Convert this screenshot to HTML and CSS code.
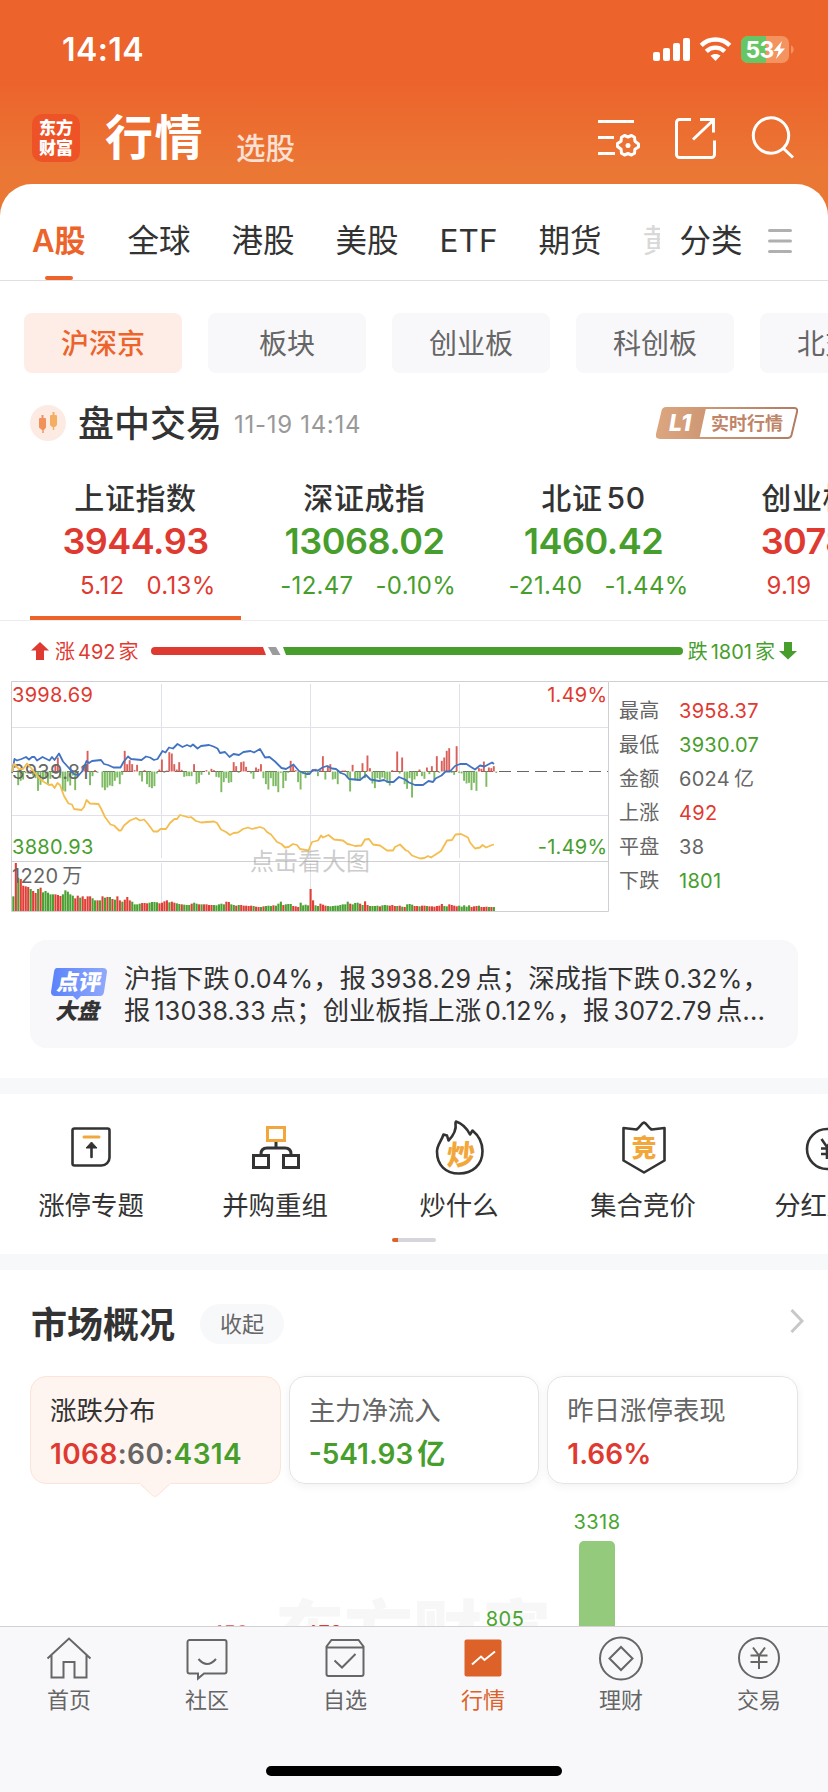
FILE: index.html
```html
<!DOCTYPE html>
<html lang="zh-CN">
<head>
<meta charset="utf-8">
<title>行情</title>
<link rel="stylesheet" href="styles.css">
</head>
<body>
<div class="app">
  <header class="top">
    <div class="status">
      <span class="clock">14:14</span>
      <svg class="status-icons" viewBox="0 0 142 28" width="142" height="28">
        <g fill="#fff">
          <rect x="0" y="16" width="7" height="9" rx="2"/><rect x="10" y="12" width="7" height="13" rx="2"/>
          <rect x="20" y="7" width="7" height="18" rx="2"/><rect x="30" y="2" width="7" height="23" rx="2"/>
          <path d="M62.500 25l-5-5.200c2.800-2.500 7.200-2.500 10 0z"/>
        </g>
        <g fill="none" stroke="#fff" stroke-width="4.400"><path d="M48.200 9.400c8-7.800 20.600-7.800 28.600 0"/><path d="M53.300 15.400c5.200-5 13.200-5 18.400 0"/></g>
        <rect x="88" y="0" width="48" height="27" rx="7" fill="#f3935f"/>
        <path d="M95 0h18v27H95a7 7 0 0 1-7-7V7a7 7 0 0 1 7-7z" fill="#66c666"/>
        <path d="M138 9.500c3.600 1 3.600 7 0 8z" fill="#f3935f"/>
        <text x="92.500" y="22" class="battery-text">53</text>
        <path d="M129 5l-8.500 10h5l-2.500 8 9-10.500h-5z" fill="#fff"/>
      </svg>
    </div>
    <div class="nav">
      <div class="logo"><span>东方</span><span>财富</span></div>
      <h1>行情</h1>
      <span class="nav-sub">选股</span>
      <svg class="nav-icons" viewBox="0 0 198 44" width="198" height="44" fill="none" stroke="#fff" stroke-width="3">
        <path d="M0 6.500h36M0 22.500h16M0 38.500h17"/>
        <path stroke-linejoin="round" d="M26.500 20.500l3.500 1.500 3.500-1.500 3 1.700.4 4 3.600 2.800v3l-3.600 2.300-.4 4-3 1.700-3.500-1.500-3.500 1.500-3-1.700-.4-4-3.600-2.800v-3l3.600-2.300.4-4z"/>
        <circle cx="30" cy="30.500" r="2.500" fill="#fff" stroke="none"/>
        <path d="M93 4.500H81.500a3 3 0 0 0-3 3v32a3 3 0 0 0 3 3h32a3 3 0 0 0 3-3V25.500M102 4.500h13.500V17.500M115 5.500L95 24.500"/>
        <circle cx="173" cy="20.500" r="17.700"/><path d="M185.500 33.500l9.500 9"/>
      </svg>
    </div>
  </header>

  <main class="sheet">
    <nav class="tabs">
      <span class="tab tab-on">A股</span><span class="tab">全球</span><span class="tab">港股</span><span class="tab">美股</span><span class="tab">ETF</span><span class="tab">期货</span><span class="tab tab-cut">黄金</span>
      <span class="tab tab-all">分类</span>
      <svg class="burger" viewBox="0 0 24 26" width="24" height="26" stroke="#b0b0b0" stroke-width="3" stroke-linecap="round"><path d="M1.500 2.500h21M1.500 13h21M1.500 23.500h21"/></svg>
    </nav>

    <div class="chips">
      <span class="chip chip-on">沪深京</span><span class="chip">板块</span><span class="chip">创业板</span><span class="chip">科创板</span><span class="chip">北交所</span>
    </div>

    <div class="session">
      <svg viewBox="0 0 36 36" width="36" height="36">
        <circle cx="18" cy="18" r="18" fill="#fcebe3"/>
        <path fill="#f0925a" d="M11.500 10h2v3h1.500a1 1 0 0 1 1 1v8.500l-2 2.500h-.3v3h-1.400v-3H12l-3-2.500V14a1 1 0 0 1 1-1h1.500z"/>
        <path fill="#f3ae63" d="M22.500 7h2v3H26a1 1 0 0 1 1 1v9l-2 2h-.8v3h-1.400v-3H22l-2-2v-9a1 1 0 0 1 1-1h1.500z"/>
      </svg>
      <h2>盘中交易</h2>
      <time>11-19 14:14</time>
      <svg class="level" viewBox="0 0 142 32" width="142" height="32">
        <defs><linearGradient id="gold" gradientUnits="userSpaceOnUse" x1="0" y1="0" x2="142" y2="0"><stop offset="0" stop-color="#dca77f"/><stop offset="1" stop-color="#b27a62"/></linearGradient></defs>
        <path fill="none" stroke="url(#gold)" stroke-width="2" d="M10 1h128q4 0 3 4l-5.500 23q-.8 3-4 3H4q-4 0-3-4L6.500 4q.8-3 3.500-3z"/>
        <path fill="url(#gold)" d="M9 1h41l-6.500 30H4q-4 0-3-4L6.500 4q.8-3 3.500-3z"/>
        <text x="13" y="24" class="level-l">L1</text>
        <text x="55" y="22.500" class="level-t">实时行情</text>
      </svg>
    </div>

    <div class="indices">
      <div class="index up index-on"><b>上证指数</b><strong>3944.93</strong><div class="chg"><span>5.12</span><span>0.13%</span></div></div>
      <div class="index down"><b>深证成指</b><strong>13068.02</strong><div class="chg"><span>-12.47</span><span>-0.10%</span></div></div>
      <div class="index down"><b>北证<i>50</i></b><strong>1460.42</strong><div class="chg"><span>-21.40</span><span>-1.44%</span></div></div>
      <div class="index up"><b>创业板指</b><strong>3078.11</strong><div class="chg"><span>9.19</span><span>0.30%</span></div></div>
    </div>

    <div class="breadth">
      <svg viewBox="0 0 20 20" width="20" height="20"><path fill="#df3a31" d="M10 1l9 8.500h-5V19H6V9.500H1z"/></svg>
      <span class="up">涨<i>492</i>家</span>
      <svg class="ratio" viewBox="0 0 532 8" width="532" height="8">
        <path fill="#df3a31" d="M4 0h108l3 8H4a4 4 0 0 1 0-8z"/><path fill="#9b9b9b" d="M117 0h8l4.500 8h-8z"/><path fill="#479e2c" d="M132 0h396a4 4 0 0 1 0 8H135z"/>
      </svg>
      <span class="down">跌<i>1801</i>家</span>
      <svg viewBox="0 0 20 20" width="20" height="20"><path fill="#479e2c" d="M10 18.500l9-8.500h-5V1H6v9H1z"/></svg>
    </div>

    <div class="market">
      <svg class="chart" id="chart" viewBox="0 0 598 232" width="598" height="232">
        <g stroke="#e0e1e9" stroke-width="1"><path d="M150.500 3v174M299.500 3v174M448.500 3v174M150.500 182v48M299.500 182v48M448.500 182v48M1 46.500h596M1 134.500h596"/></g>
        <path d="M.5 .5h597v230H.5zM.5 180.500h597" fill="none" stroke="#d0d0d4"/>
        <path d="M2 90.500h595" stroke="#666" stroke-dasharray="12 6"/>
        <g class="chart-label">
          <text x="1" y="21" fill="#df3a31">3998.69</text>
          <text x="596.500" y="21" text-anchor="end" fill="#df3a31">1.49%</text>
          <text x="1" y="173" fill="#479e2c">3880.93</text>
          <text x="596.500" y="173" text-anchor="end" fill="#479e2c">-1.49%</text>
        </g>
        <g id="bars"></g>
        <g class="chart-label" fill="#666"><text x="1" y="97.500">3939.81</text><text x="1" y="202">1220<tspan dx="4">万</tspan></text></g>
        <g id="lines"></g>
        <text x="239" y="189" class="hint">点击看大图</text>
      </svg>
      <dl class="stats">
        <dt>最高</dt><dd class="up">3958.37</dd>
        <dt>最低</dt><dd class="down">3930.07</dd>
        <dt>金额</dt><dd>6024<i>亿</i></dd>
        <dt>上涨</dt><dd class="up">492</dd>
        <dt>平盘</dt><dd>38</dd>
        <dt>下跌</dt><dd class="down">1801</dd>
      </dl>
    </div>

    <div class="review">
      <svg viewBox="0 0 58 56" width="58" height="56">
        <defs><linearGradient id="blue" x1="0" x2="1"><stop offset="0" stop-color="#5a82fa"/><stop offset="1" stop-color="#90a9fb"/></linearGradient></defs>
        <path fill="url(#blue)" d="M7 2h46q4 0 4 4l-3 20q-.6 4-4 4H31l-4 4-4-4H5q-4 0-4-4L4 6q.500-4 3-4z"/>
        <text transform="translate(6 24) skewX(-10)" class="rv-a">点评</text>
        <text transform="translate(5 53) skewX(-14)" class="rv-b">大盘</text>
      </svg>
      <p>沪指下跌<i class="pct">0.04%</i>，报<i>3938.29</i>点；深成指下跌<i class="pct">0.32%</i>，<br>报<i>13038.33</i>点；创业板指上涨<i class="pct">0.12%</i>，报<i>3072.79</i>点…</p>
    </div>

    <section class="shortcuts">
      <div class="short">
        <svg viewBox="0 0 56 56" width="56" height="56" fill="none" stroke="#333" stroke-width="2.600"><path d="M10.500 9.500h33a2 2 0 0 1 2 2v27a8 8 0 0 1-8 8h-27a2 2 0 0 1-2-2v-33a2 2 0 0 1 2-2z"/><path d="M20 18h15" stroke="#f2a73d" stroke-width="3" stroke-linecap="round"/><path d="M27.500 26v12" stroke-linecap="round"/><path d="M27.500 23l5.500 6H22z" fill="#333" stroke-width="1"/></svg>
        <span>涨停专题</span>
      </div>
      <div class="short">
        <svg viewBox="0 0 56 56" width="56" height="56" fill="none" stroke="#333" stroke-width="3"><path d="M19.500 8.500h17v13h-17z" stroke="#f2a73d"/><path d="M5.500 36.500h15v12h-15zM35.500 36.500h15v12h-15zM28 23v6M13 36v-1q0-6 6-6h18q6 0 6 6v1"/></svg>
        <span>并购重组</span>
      </div>
      <div class="short">
        <svg viewBox="0 0 56 56" width="56" height="56" fill="none" stroke="#333" stroke-width="2.600" stroke-linejoin="round"><path d="M24 2.500c6 2 11 7 14 13l2.500-4c6 5 10 13 10 20.500 0 14-10 22.500-23.500 22.500S5 46 5 32.500C5 26 9.500 22 11.500 15.500l3.500 1 1.500 5C22 16 24.500 10 23.500 4z"/><text transform="translate(14 45.500) skewX(-5)" class="glyph glyph-chao">炒</text></svg>
        <span>炒什么</span>
      </div>
      <div class="short">
        <svg viewBox="0 0 56 56" width="56" height="56" fill="none" stroke="#333" stroke-width="2.600" stroke-linejoin="round"><path d="M28 3.500c2.500 .5 4 5 7.500 7l13-1.500v32.500L28 53.500 7.500 41.500V9l13 1.500c3.500-2 5-6.500 7.500-7z"/><text x="15.500" y="38" class="glyph">竞</text></svg>
        <span>集合竞价</span>
      </div>
      <div class="short">
        <svg viewBox="0 0 56 56" width="56" height="56" fill="none" stroke="#333" stroke-width="2.600"><circle cx="27" cy="30" r="20"/><path d="M21.500 20l5.500 8 5.500-8M27 28v12M21 29.500h12M21 35h12"/></svg>
        <span>分红送配</span>
      </div>
      <div class="pager"></div>
    </section>

    <section class="overview">
      <div class="ov-head"><h2>市场概况</h2><span class="pill">收起</span>
        <svg viewBox="0 0 14 24" width="14" height="24" fill="none" stroke="#c8c8c8" stroke-width="3"><path d="M1.500 1l10.500 11L1.500 23"/></svg></div>
      <div class="cards">
        <div class="card card-on"><span>涨跌分布</span><strong><em class="up">1068</em>:60:<em class="down">4314</em></strong>
          <svg class="tail" viewBox="0 0 30 14" width="30" height="14"><path d="M0 0h30v2L17.500 12.500q-2.500 2-5 0L0 2z" fill="#fef5f0"/><path d="M1 1.500L12.500 12.500q2.500 2 5 0L29 1.500" fill="none" stroke="#fce4d8"/></svg></div>
        <div class="card"><span>主力净流入</span><strong class="down">-541.93<i>亿</i></strong></div>
        <div class="card"><span>昨日涨停表现</span><strong class="up">1.66%</strong></div>
      </div>
      <svg class="dist" viewBox="0 0 828 142" width="828" height="142">
        <text x="275" y="174" class="mark">东方财富</text>
        <g class="dist-label"><text x="232" y="155.500" fill="#e8706a">150</text><text x="324" y="155.500" fill="#df3a31">479</text><text x="505" y="142" fill="#4aa52e">805</text><text x="597" y="45" fill="#4aa52e">3318</text></g>
        <path fill="#93ca7b" d="M579 62a5 5 0 0 1 5-5h26a5 5 0 0 1 5 5v80h-36z"/>
      </svg>
    </section>
  </main>

  <footer class="dock">
    <div class="dock-items">
      <div class="dock-item"><svg viewBox="0 0 46 46" width="46" height="46"><path d="M1.500 23.500L23 3.500l21.500 20M5.500 20v22.500h12V27h11v15.500h12V20"/></svg><span>首页</span></div>
      <div class="dock-item"><svg viewBox="0 0 46 46" width="46" height="46"><path d="M5.500 5h35a2 2 0 0 1 2 2v29.500a2 2 0 0 1-2 2H20l-6 5v-5H5.500a2 2 0 0 1-2-2V7a2 2 0 0 1 2-2zM14.500 24q8.500 10 17.500 0"/></svg><span>社区</span></div>
      <div class="dock-item"><svg viewBox="0 0 46 46" width="46" height="46"><path d="M9.500 5h27l5 6.500V39a2 2 0 0 1-2 2h-33a2 2 0 0 1-2-2V11.500zM4.500 12.500h37M12.500 25.500l7.500 7 13.500-13.500"/></svg><span>自选</span></div>
      <div class="dock-item dock-on"><svg viewBox="0 0 46 46" width="46" height="46"><rect x="4.500" y="4.500" width="37" height="37" rx="2" fill="#dc6229" stroke="none"/><path stroke="#fff" d="M12 29.500l9-8 3.500 3.500L35 16.500"/></svg><span>行情</span></div>
      <div class="dock-item"><svg viewBox="0 0 46 46" width="46" height="46"><circle cx="23" cy="23.500" r="21"/><path d="M23 12l11.500 11.500L23 35 11.500 23.500z"/></svg><span>理财</span></div>
      <div class="dock-item"><svg viewBox="0 0 46 46" width="46" height="46"><circle cx="23" cy="23" r="20"/><path d="M17 12.500l6 8 6-8M23 20.500V34M14.500 20.500h17M14.500 27h17"/></svg><span>交易</span></div>
    </div>
    <div class="home-bar"></div>
  </footer>
</div>
<script src="chart.js"></script>
</body>
</html>
```
FILE: styles.css
```css
* { box-sizing: border-box; margin: 0; padding: 0; }
body { font-family: Inter, "Noto Sans CJK SC", sans-serif; color: #333; background: #fff; }
i, em { font-style: normal; }
svg { display: block; flex: none; }
.app { width: 828px; height: 1792px; overflow: hidden; display: flex; flex-direction: column; background: linear-gradient(#ec632b 0, #ec632b 80px, #eb7735 170px, #eb7735 260px, #fff 260px); }
.up { color: #df3a31; }
.down { color: #479e2c; }

.top { flex: none; height: 184px; color: #fff; }
.status { display: flex; justify-content: space-between; height: 100px; padding: 33px 33px 0 62px; }
.clock { font-size: 32px; line-height: 34px; font-weight: 600; letter-spacing: .4px; }
.status-icons { margin-top: 3px; }
.battery-text { font-size: 23px; font-weight: 700; fill: #fff; letter-spacing: -.8px; }
.nav { display: flex; align-items: flex-start; padding: 0 32px; height: 84px; }
.logo { width: 48px; height: 48px; margin-top: 14px; border-radius: 10px; background: #ee5328; display: flex; flex-direction: column; align-items: center; justify-content: center; font-size: 17px; line-height: 20px; font-weight: 900; }
.nav h1 { font-size: 48px; line-height: 72px; font-weight: 600; margin: 2px 0 0 25px; letter-spacing: 1.5px; }
.nav-sub { font-size: 29.500px; line-height: 44px; font-weight: 500; margin: 26px 0 0 32px; color: #fce0d3; }
.nav-icons { margin: 15px 0 0 auto; }

.sheet { flex: 1; min-height: 0; background: #fff; border-radius: 32px 32px 0 0; overflow: hidden; }
.tabs { display: flex; align-items: center; height: 97px; padding: 18px 36px 0 32px; border-bottom: 1px solid #e0e0e0; font-size: 31.500px; line-height: 40px; position: relative; }
.tab { flex: none; margin-right: 41px; white-space: nowrap; }
.tab-on { color: #ec632b; font-weight: 600; font-size: 31px; margin-right: 42px; }
.tab-on::after { content: ""; position: absolute; left: 45px; bottom: 0; width: 28px; height: 4px; border-radius: 2px; background: #ec632b; }
.tab-cut { width: 17px; margin-right: 20px; overflow: hidden; color: #d8d8d8; }
.tab-all { margin-right: 0; }
.burger { margin-left: auto; }

.chips { display: flex; gap: 26px; padding: 32px 24px 0; height: 92px; }
.chip { flex: none; width: 158px; height: 60px; border-radius: 8px; background: #f8f8fa; color: #666; font-size: 28px; line-height: 62px; text-align: center; }
.chip-on { background: #fdede6; color: #ec632b; font-weight: 500; }

.session { display: flex; align-items: center; height: 100px; padding: 0 30px; }
.session h2 { margin: 2px 0 0 12px; font-size: 36px; line-height: 50px; font-weight: 500; }
.session time { margin: 2px 0 0 12px; font-size: 24px; letter-spacing: .7px; color: #999; }
.level { margin-left: auto; }
.level-l { font: italic 800 23px Inter, sans-serif; fill: #fff; }
.level-t { font-size: 18px; font-weight: 600; fill: #c08568; }

.indices { display: flex; gap: 18px; height: 148px; padding: 0 30px; border-bottom: 1px solid #ececec; }
.index { flex: none; width: 211px; display: flex; flex-direction: column; align-items: center; }
.index b { color: #333; font-size: 30px; line-height: 44px; margin-top: 3px; font-weight: 500; letter-spacing: .6px; white-space: nowrap; }
.index b i { margin-left: 4px; }
.index strong { font-size: 36px; line-height: 44px; font-weight: 600; letter-spacing: -.5px; margin-top: -1px; }
.chg { width: 100%; display: grid; grid-template-columns: 1fr 1fr; gap: 22px; font-size: 24px; line-height: 30px; letter-spacing: .3px; margin-top: 8px; }
.chg span { white-space: nowrap; }
.chg span:first-child { justify-self: end; }
.index-on { border-bottom: 4px solid #ec632b; }

.breadth { display: flex; align-items: center; height: 60px; padding: 0 30px; font-size: 20px; }
.breadth span { white-space: nowrap; line-height: 30px; margin: 1px 0 0 5px; }
.breadth i { margin: 0 3px; }
.ratio { margin: 0 0 0 auto; }
.breadth svg:last-child { margin-left: 3px; }

.market { display: flex; padding-left: 11px; height: 232px; }
.chart-label { font-size: 20px; letter-spacing: .3px; }
.hint { font-size: 24px; fill: #999; fill-opacity: .5; }
.stats { flex: 1; border-top: 1px solid #d0d0d4; display: grid; grid-template-columns: 60px 1fr; grid-auto-rows: 34px; padding: 12px 0 0 10px; font-size: 20px; line-height: 34px; letter-spacing: .3px; color: #666; }
.stats i { margin-left: 4px; }
.stats .up { color: #df3a31; }
.stats .down { color: #479e2c; }

.review { display: flex; height: 108px; margin: 27px 30px 30px; padding: 26px 0 0 20px; border-radius: 16px; background: #f8f8fa; }
.review p { margin: -3px 0 0 16px; font-size: 26.400px; line-height: 31px; white-space: nowrap; }
.review i { margin: 0 4px; font-size: 25px; letter-spacing: .3px; }
.review .pct { margin-right: 0; }
.rv-a { font-size: 22px; font-weight: 900; fill: #fff; }
.rv-b { font-size: 22px; font-weight: 900; fill: #333; }

.shortcuts { position: relative; display: flex; height: 192px; border-top: 16px solid #f7f8fa; border-bottom: 16px solid #f7f8fa; overflow: hidden; }
.short { flex: none; width: 184px; display: flex; flex-direction: column; align-items: center; padding-top: 25px; font-size: 26.400px; line-height: 36px; }
.short span { margin: 12px 2px 0 0; }
.glyph { font-size: 25px; font-weight: 900; fill: #f2a73d; stroke: none; }
.glyph-chao { font-size: 28px; }
.pager { position: absolute; left: 392px; bottom: 12px; width: 44px; height: 4px; border-radius: 2px; background: linear-gradient(90deg, #dc6229 6px, #d5d5db 6px); }

.ov-head { display: flex; align-items: center; height: 106px; padding: 0 24px 0 31px; }
.ov-head h2 { font-size: 36px; line-height: 50px; margin-top: 3px; font-weight: 600; }
.pill { width: 84px; height: 40px; margin: 2px 0 0 25px; border-radius: 20px; background: #f7f8fa; color: #666; font-size: 22px; line-height: 40px; text-align: center; }
.ov-head svg { margin: -4px 0 0 auto; }
.cards { display: grid; grid-template-columns: repeat(3, 1fr); gap: 8px; padding: 0 30px; }
.card { position: relative; height: 108px; border: 1px solid #e4e4e4; border-radius: 16px; padding: 15px 19px; display: flex; flex-direction: column; box-shadow: 0 2px 10px rgba(0, 0, 0, .06); color: #666; font-size: 26.400px; line-height: 36px; }
.card strong { font-size: 28px; line-height: 36px; margin-top: 8px; font-weight: 600; }
.card strong i { margin-left: 4px; }
.card-on { background: #fef5f0; border-color: #fce4d8; box-shadow: none; }
.card-on strong { letter-spacing: .4px; }
.card-on > span { color: #333; }
.card strong.up { color: #df3a31; }
.card strong.down { color: #479e2c; }
.tail { position: absolute; left: 109px; top: 106px; }
.dist-label { font-size: 20px; text-anchor: middle; letter-spacing: .5px; }
.mark { font-size: 69px; font-weight: 900; fill: #f7f7f7; }

.dock { flex: none; height: 166px; background: #f8f8fa; border-top: 1px solid #d2d2d2; display: flex; flex-direction: column; align-items: center; justify-content: space-between; padding-bottom: 16px; }
.dock-items { display: flex; width: 828px; }
.dock-item { width: 138px; display: flex; flex-direction: column; align-items: center; padding-top: 8px; color: #666; font-size: 22px; line-height: 30px; }
.dock-item svg { fill: none; stroke: #666; stroke-width: 2; }
.dock-item span { margin-top: 4px; }
.dock-on { color: #dc6229; }
.home-bar { width: 296px; height: 10px; border-radius: 5px; background: #000; }
```
FILE: chart.js
```js
// One slot per trading minute, 241 slots across the plot.
const SLOT = 2.477;
const NS = 'http://www.w3.org/2000/svg';

function add(parent, tag, attrs) {
  const el = document.createElementNS(NS, tag);
  for (const k in attrs) el.setAttribute(k, attrs[k]);
  document.getElementById(parent).appendChild(el);
}

// Strength bars around the middle line, in thirds of a pixel.
const strength = [
  0,0,-41,-28,-24,-5,-6,4,-12,-20,-58,-40,-25,-20,-38,-22,-5,20,42,-20,-58,-60,-30,-42,-12,-56,-10,0,12,14,62,-41,-14,4,-4,0,
  -48,-56,-48,-42,-44,-28,-18,-38,-10,62,22,34,22,4,20,-12,-30,4,-38,-47,-50,-44,-6,6,36,-4,3,58,54,22,6,28,5,-16,-14,-14,-14,
  22,-38,-34,-10,0,4,-10,8,4,-16,-18,-62,-32,-20,-34,-32,28,16,-4,28,30,14,2,-6,-22,12,8,22,-20,-38,-54,-20,-44,-44,-62,-4,
  -50,-28,-4,32,18,4,-32,-54,-8,-20,-5,-5,4,8,-14,4,46,-24,18,22,-24,-22,-38,-6,3,3,-20,-60,20,-26,-28,-22,25,-20,48,10,-36,
  -50,-20,-24,-18,-22,-34,-42,4,2,60,-6,42,-38,-52,-20,-78,-24,-14,6,-14,-22,12,-8,16,-28,46,-4,32,42,62,70,-4,-10,76,-4,-6,
  -28,-36,-34,-56,-34,-58,10,8,30,-46,12,10,16,-4];
strength.forEach((v, i) => v && add('bars', 'rect', {
  x: (1.3 + i * SLOT).toFixed(2), y: v > 0 ? 90.5 - v / 3 : 90.5, width: 1.9,
  height: Math.abs(v) / 3, fill: v > 0 ? '#d9605b' : '#7dba62'
}));

// Turnover bars: height in thirds of a pixel, then direction.
const volume = ('44g 144r 100g 96r 76r 74r 72r 66g 60r 54r 66g 70r 56g 60g 55g 50g 50g 50r 48r 45r 50g 62g 58g 50g 46g 38r 46r 40g 44r 36r ' +
  '44r 44r 38g 32g 32r 32g 44r 40g 42r 42g 36r 34g 44r 32r 28g 34r 42r 32r 28g 20g 20g 22g 24r 24r 23r 25g 27g 27g 26g 23r 25r 29r 32r 26g ' +
  '28r 25r 23g 21g 20r 19g 18g 18g 22r 25g 22g 20r 20g 20r 20r 18r 18r 18g 17g 20g 22g 20g 28r 27r 20g 18g 16r 18g 18r 16r 16r 15r 16r 15g 13r ' +
  '12r 12g 14r 15g 16g 15g 17r 16g 22g 28g 18r 20g 21g 21g 15r 14r 12r 25g 17g 19g 17g 66r 32r 17g 15g 22r 19r 16r 15g 14g 15g 16g 16g ' +
  '18g 20g 20g 28g 22r 20g 24g 25g 22r 18g 29r 18r 15g 15g 15g 16g 14r 17g 18g 17g 16r 18r 15r 15g 16r 13g 12r 20g 21g 19g 15r 15r 14g 16r 16r ' +
  '15g 14r 14r 13r 15r 16r 21r 15g 14g 20r 18r 16r 14r 16g 13g 17g 13g 17g 12r 14r 15r 16g 12r 12r 13r 12g 12r 12g').split(' ');
volume.slice(0, 195).forEach((s, i) => {
  const h = parseInt(s, 10) / 3;
  add('bars', 'rect', { x: (1.3 + i * SLOT).toFixed(2), y: 230 - h, width: 2.1, height: h, fill: s.endsWith('r') ? '#df3f37' : '#4ba032' });
});

const price = '1,92 3.500,78 6,79.500 10.500,78 15,76 18,78.500 21,76 23.500,76 26,79.500 31.500,76 35.500,78 38.500,79.500 41,76 43.500,79 48,72.500 52,80.500 57,86 63,93 67.500,94.500 71.500,90 75.500,80 78,82 81,80 90,79 93,83 97,84 102.500,86.500 109.500,86.500 112.500,81 117,75.500 120,78 130.500,79 135,75.500 139,76.500 143,79 146.500,78 151.500,70 154.500,71.500 158,66.500 162,67.500 166.500,63 171.500,66 176,64 179.500,65.500 182,63.500 186.500,67.500 190,65 198,64 202.500,65.500 206.500,67.500 209,72 214,71 218.500,76 222.500,73 228,74 232.500,71 239.500,70 243,71.500 249,68 254,76.500 258.500,76 264,80.500 270.500,87 275,88 282.500,83.500 288,90 295.500,93 298.500,93 301.500,89 307,89.500 311.500,86.500 316,85 321,87.500 325,88 330,92 334,93.500 338,98 349,99 355,94 359.500,98.500 368,100 373,99 377,101 382.500,101 388,96 394,98.500 398,101.500 404,104 412,104 417.500,100 422,101 424.500,97.500 430.500,94.500 434.500,90.500 439,90.500 444,85 449,83 455.500,83 460,86 464,88.500 469,84.500 473.500,85.500 481,81.500 483,83';
const average = '1,91 3,83 8,88 12,88 16,82.500 20,87 24,92 28,97 33,101 38,104 41,103.500 43.500,107 46.500,102 49,104 53,115 57.500,122.500 61,123.500 63,128 70.500,129 73,126 75.500,119 79,122.500 87.500,123 90,127.500 94,136 99.500,143.500 103,144.500 108,149.500 110,149.500 113,144.500 119,139.500 125,137 129,139.500 133,138.500 137,143 142.500,150.500 146.500,150.500 149.500,148 155,148 159,142 163.500,138 166,138 169,134 178,136.500 180,136 185,140 190,141.500 203,140.500 206,142 210,148.500 215,151 219,154 222.500,152 227,151.500 232,148 237,146.500 241,148 249,146 253,147.500 256,151 260,153.500 266,161 270.500,163 274,166.500 277.500,166 282,163 286,164 289,168 297.500,169.500 301,161 307,159.500 310,154.500 312,156.500 317.500,154 323,158.500 332,159.500 336.500,163 339,163.500 344,165 350.500,164.500 354,158.500 358,158 362,163.500 369,164.500 376,169.500 382,169.500 384,166 389,163.500 395,169.500 397,170 401,174.500 409,177.500 413.500,177 417,175 420,176.500 427,172 430,170 436,159.500 441,159 444.500,153.500 450,153 457,156.500 459,161.500 464,167.500 469,166.500 471.500,164 475,166.500 481,164 483,163.500';
add('lines', 'polyline', { points: price, fill: 'none', stroke: '#4273c2', 'stroke-width': 1.8, 'stroke-linejoin': 'round' });
add('lines', 'polyline', { points: average, fill: 'none', stroke: '#f4bd4f', 'stroke-width': 1.8, 'stroke-linejoin': 'round' });
```
